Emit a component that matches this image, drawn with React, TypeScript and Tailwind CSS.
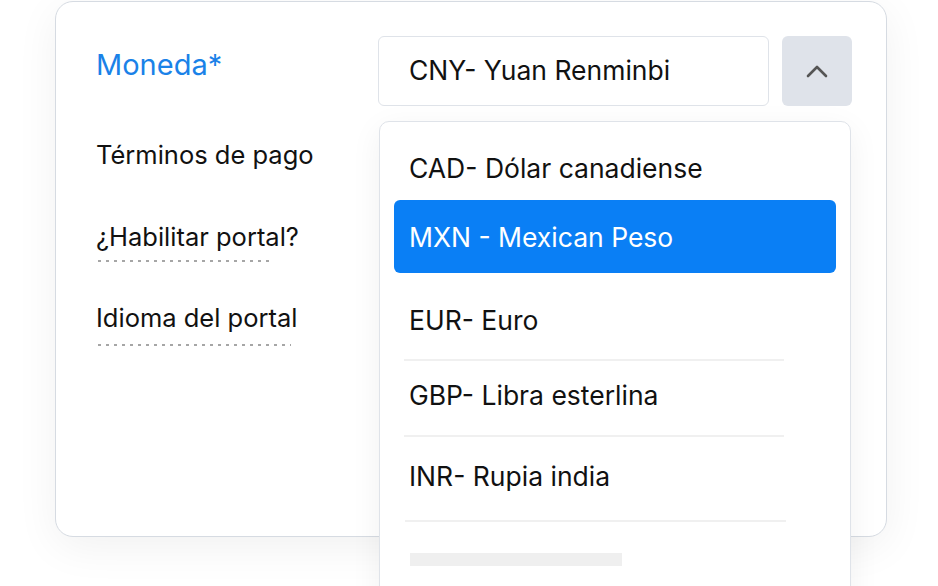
type Item = {
  label: string;
  pad: string;
  sep: string;
};

const items: Item[] = [
  { label: "EUR- Euro", pad: "pt-[32px] pb-[24px]", sep: "ml-[10px] w-[380px]" },
  { label: "GBP- Libra esterlina", pad: "pt-[19px] pb-[25px]", sep: "ml-[10px] w-[380px]" },
  { label: "INR- Rupia india", pad: "pt-[24px] pb-[29px]", sep: "ml-[11px] w-[381px]" },
];

function DottedRule({ width }: { width: string }) {
  return (
    <div
      className={`h-[2px] ${width} bg-[repeating-linear-gradient(to_right,#a6a6a6_0_3px,transparent_3px_8px)]`}
    />
  );
}

export default function App() {
  return (
    <div
      className="relative h-[586px] w-[938px] overflow-hidden bg-white text-[#111]"
      style={{ fontFamily: "Inter, 'Noto Sans', sans-serif" }}
    >
      {/* card */}
      <div className="ml-[55px] mt-px flex h-[536px] w-[832px] rounded-[18px] border border-[#d6dbe2] bg-white pl-[40px] shadow-[0_10px_44px_rgba(0,0,0,0.06)]">
        <div className="flex w-[282px] flex-col">
          <div className="mt-[45px] text-[29px] leading-[36px] text-[#1a82e8]">Moneda*</div>
          <div className="mt-[57px] text-[25.5px] leading-[30px]">Términos de pago</div>
          <div className="mt-[52px] text-[25.5px] leading-[30px]">¿Habilitar portal?</div>
          <div className="mt-[8px] pl-[2px]">
            <DottedRule width="w-[172px]" />
          </div>
          <div className="mt-[41px] text-[25.5px] leading-[30px]">Idioma del portal</div>
          <div className="mt-[11px] pl-[2px]">
            <DottedRule width="w-[193px]" />
          </div>
        </div>

        <div className="mt-[34px] flex h-[70px] gap-[13px]">
          <div className="flex w-[391px] items-center rounded-[6px] border border-[#dfe3e9] pl-[30px] text-[26.5px]">
            CNY- Yuan Renminbi
          </div>
          <button className="flex w-[70px] items-center justify-center rounded-[6px] bg-[#dfe3ea] text-[#555]">
            <svg width="22" height="14" viewBox="0 0 22 14" fill="none">
              <path
                d="M2 12 L11 3 L20 12"
                stroke="currentColor"
                strokeWidth="2.6"
                strokeLinecap="round"
                strokeLinejoin="round"
              />
            </svg>
          </button>
        </div>
      </div>

      {/* open dropdown */}
      <div className="absolute left-[379px] top-[121px] h-[520px] w-[472px] rounded-[10px] border border-[#dfe3e9] bg-white px-[14px] text-[26.5px] leading-[30px] shadow-[0_8px_32px_rgba(0,0,0,0.06)]">
        <div className="pl-[15px] pt-[31px]">CAD- Dólar canadiense</div>
        <div className="mt-[17px] flex h-[73px] items-center rounded-[6px] bg-[#0a7ff5] pl-[15px] text-white">
          MXN - Mexican Peso
        </div>
        {items.map((item) => (
          <div key={item.label}>
            <div className={`pl-[15px] ${item.pad}`}>{item.label}</div>
            <div className={`h-[2px] bg-[#f0f0f0] ${item.sep}`} />
          </div>
        ))}
        <div className="ml-[16px] mt-[31px] h-[13px] w-[212px] bg-[#efefef]" />
      </div>
    </div>
  );
}
